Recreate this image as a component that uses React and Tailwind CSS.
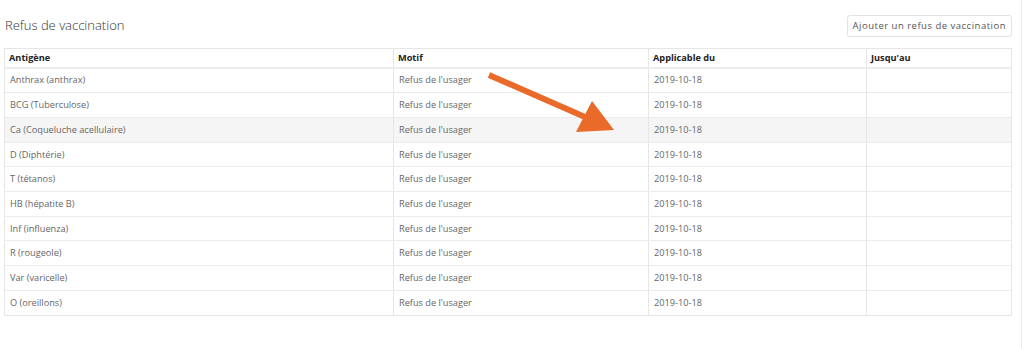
import React from "react";

const rows = [
  "Anthrax (anthrax)",
  "BCG (Tuberculose)",
  "Ca (Coqueluche acellulaire)",
  "D (Diphtérie)",
  "T (tétanos)",
  "HB (hépatite B)",
  "Inf (influenza)",
  "R (rougeole)",
  "Var (varicelle)",
  "O (oreillons)",
];

const font = { fontFamily: '"Open Sans", "Noto Sans", sans-serif' };

export default function App() {
  return (
    <div className="w-[1024px] h-[349px] bg-white flex" style={font}>
      <div className="flex-1 flex flex-col pl-[4px] pr-[9px]">
        <div className="flex items-end justify-between h-[48px] pb-[11px]">
          <h1 className="text-[13px] font-light text-[#333] leading-none pb-[5px] pl-[1px]">
            Refus de vaccination
          </h1>
          <button className="h-[22px] px-[5px] border border-[#e3e3e3] rounded-[3px] bg-white text-[9.5px] tracking-[0.5px] text-[#555] leading-none">
            Ajouter un refus de vaccination
          </button>
        </div>
        <div className="border border-[#e6e6e6] text-[9.2px]">
          <div className="grid grid-cols-[388px_255px_218px_1fr] h-[19.5px] items-center font-bold text-[#222] border-b-2 border-[#ececec]">
            <div className="pl-[4px]">Antigène</div>
            <div className="pl-[4px] border-l border-[#e6e6e6] h-full flex items-center">Motif</div>
            <div className="pl-[4px] border-l border-[#e6e6e6] h-full flex items-center">Applicable du</div>
            <div className="pl-[4px] border-l border-[#e6e6e6] h-full flex items-center">Jusqu'au</div>
          </div>
          {rows.map((r, i) => (
            <div
              key={r}
              className={`grid grid-cols-[388px_255px_218px_1fr] h-[24.7px] text-[#666] ${
                i < rows.length - 1 ? "border-b border-[#ececec]" : ""
              } ${i === 2 ? "bg-[#f5f5f5]" : ""}`}
            >
              <div className="pl-[5px] flex items-center">{r}</div>
              <div className="pl-[5px] border-l border-[#e6e6e6] flex items-center">Refus de l'usager</div>
              <div className="pl-[5px] border-l border-[#e6e6e6] flex items-center">2019-10-18</div>
              <div className="border-l border-[#e6e6e6]"></div>
            </div>
          ))}
        </div>
      </div>
      <div className="w-[3px] border-l border-[#ececec]"></div>
      <svg
        className="absolute left-0 top-0 pointer-events-none"
        width="1024"
        height="349"
      >
        <line x1="489" y1="75" x2="585" y2="117" stroke="#ea6a2a" strokeWidth="6" />
        <polygon points="576,132 592,101 614,130" fill="#ea6a2a" />
      </svg>
    </div>
  );
}
